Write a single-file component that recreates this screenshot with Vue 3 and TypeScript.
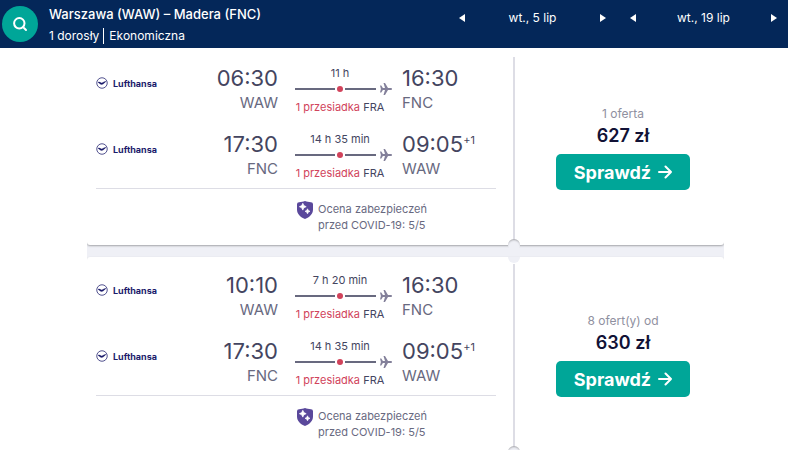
<script setup lang="ts">
interface Leg {
  departTime: string
  from: string
  duration: string
  arriveTime: string
  to: string
  nextDay?: string
}
interface Offer {
  id: number
  legs: Leg[]
  count: string
  price: string
}

const dates: string[] = ['wt., 5 lip', 'wt., 19 lip']

const back: Leg = {
  departTime: '17:30', from: 'FNC', duration: '14 h 35 min',
  arriveTime: '09:05', to: 'WAW', nextDay: '+1',
}

const offers: Offer[] = [
  {
    id: 1,
    legs: [{ departTime: '06:30', from: 'WAW', duration: '11 h', arriveTime: '16:30', to: 'FNC' }, back],
    count: '1 oferta',
    price: '627 zł',
  },
  {
    id: 2,
    legs: [{ departTime: '10:10', from: 'WAW', duration: '7 h 20 min', arriveTime: '16:30', to: 'FNC' }, back],
    count: '8 ofert(y) od',
    price: '630 zł',
  },
]
</script>

<template>
  <div class="page">
    <header class="top">
      <button class="search" type="button" aria-label="Szukaj">
        <svg width="16" height="16" viewBox="0 0 16 16" fill="none" stroke="#fff" stroke-width="2">
          <circle cx="7.3" cy="7.3" r="5.2" />
          <path d="M12 12l2 2" stroke-linecap="round" />
        </svg>
      </button>
      <div class="trip">
        <h1 class="trip-title">Warszawa (WAW) – Madera (FNC)</h1>
        <p class="trip-info"><span>1 dorosły</span><span class="cabin">Ekonomiczna</span></p>
      </div>
      <div class="dates">
        <div v-for="date in dates" :key="date" class="date">
          <button class="arrow" type="button" aria-label="Poprzedni dzień">
            <svg width="6" height="8" viewBox="0 0 6 8"><path d="M6 0v8L0 4z" fill="#fff" /></svg>
          </button>
          <span>{{ date }}</span>
          <button class="arrow" type="button" aria-label="Następny dzień">
            <svg width="6" height="8" viewBox="0 0 6 8"><path d="M0 0v8l6-4z" fill="#fff" /></svg>
          </button>
        </div>
      </div>
    </header>

    <main class="results">
      <div class="list">
        <article v-for="offer in offers" :key="offer.id" class="card">
          <div class="flights">
            <div class="legs">
              <div v-for="(leg, i) in offer.legs" :key="i" class="leg">
                <div class="carrier">
                  <svg width="12" height="12" viewBox="0 0 24 24" fill="none" stroke="#1b1b6b">
                    <circle cx="12" cy="12" r="10.5" stroke-width="1.5" />
                    <path d="M4 10.500c3-1 5 1 7 1.500 2 .3 4-2.500 9-3.500-2 2-5 6-8.500 6.500C8.500 15 7 12 4 10.500z" fill="#1b1b6b" stroke-width=".8" />
                  </svg>
                  <span>Lufthansa</span>
                </div>
                <div class="stop depart">
                  <span class="time">{{ leg.departTime }}</span>
                  <span class="code">{{ leg.from }}</span>
                </div>
                <div class="route">
                  <span class="duration">{{ leg.duration }}</span>
                  <div class="track">
                    <i class="line first"></i>
                    <i class="dot"></i>
                    <i class="line"></i>
                    <svg class="plane" width="12" height="12" viewBox="0 0 12 12">
                      <path d="M0 2.500h1.300L2.900 5H5L3.500 0H5l3 5h2.800C11.600 5 12 5.500 12 6s-.4 1-1.200 1H8l-3 5H3.500L5 7H2.900L1.300 9.500H0L.9 6z" fill="#83809a" />
                    </svg>
                  </div>
                  <span class="transfer"><b>1 przesiadka</b> FRA</span>
                </div>
                <div class="stop">
                  <span class="time">{{ leg.arriveTime }}<sup v-if="leg.nextDay">{{ leg.nextDay }}</sup></span>
                  <span class="code">{{ leg.to }}</span>
                </div>
              </div>
            </div>
            <div class="safety">
              <svg width="16" height="18" viewBox="0 0 16 18">
                <path d="M2 1.200C4.500 1.200 6 .6 8 0c2 .6 3.500 1.200 6 1.200a2 2 0 0 1 2 2V8.500c0 4.500-3.500 7.700-8 9.500-4.500-1.800-8-5-8-9.500V3.200a2 2 0 0 1 2-2z" fill="#5a489b" />
                <path d="M5.800 2.300l1.100 2.300 2.300 1.100-2.300 1.100-1.100 2.300-1.100-2.300-2.300-1.100 2.300-1.100zM10.500 7.800l.8 1.700 1.700.8-1.700.8-.8 1.700-.8-1.700-1.700-.8 1.700-.8z" fill="#fff" stroke="#fff" stroke-width=".7" />
              </svg>
              <p>Ocena zabezpieczeń<br />przed COVID-19: 5/5</p>
            </div>
          </div>
          <div class="divider"></div>
          <div class="deal">
            <span class="count">{{ offer.count }}</span>
            <strong class="price">{{ offer.price }}</strong>
            <button class="check" type="button">
              <span>Sprawdź</span>
              <svg width="14" height="14" viewBox="0 0 14 14" fill="none" stroke="#fff" stroke-width="2" stroke-linecap="round" stroke-linejoin="round">
                <path d="M1 7h12M7.500 1.500L13 7l-5.500 5.500" />
              </svg>
            </button>
          </div>
        </article>
      </div>
    </main>
  </div>
</template>

<style>
body {
  background: #fff;
}
</style>

<style scoped>
.page {
  box-sizing: border-box;
  display: flex;
  flex-direction: column;
  height: 100vh;
  padding-bottom: 4px;
  font-family: Inter, "Liberation Sans", sans-serif;
  color: #444560;
}
h1, p {
  margin: 0;
}
button {
  padding: 0;
  border: 0;
  background: none;
  font: inherit;
  color: inherit;
  cursor: pointer;
}
svg {
  display: block;
  flex: none;
}
.top {
  display: flex;
  align-items: center;
  flex: none;
  height: 48px;
  padding: 0 11px 0 2px;
  background: #042759;
  color: #fff;
}
.search {
  display: grid;
  place-items: center;
  width: 36px;
  height: 36px;
  border-radius: 50%;
  background: #00a698;
}
.trip {
  flex: 1;
  padding-left: 11px;
}
.trip-title {
  font-size: 13px;
  line-height: 20px;
  font-weight: 500;
}
.trip-info {
  display: flex;
  align-items: center;
  font-size: 12px;
  line-height: 16px;
  padding-top: 4px;
  font-weight: 400;
}
.cabin {
  margin-left: 4px;
  padding-left: 5px;
  border-left: 1px solid #fff;
}
.dates {
  display: flex;
  gap: 24px;
  align-self: flex-start;
  padding-top: 10px;
}
.date {
  display: flex;
  align-items: center;
  justify-content: space-between;
  width: 147px;
  font-size: 12px;
  line-height: 16px;
}
.results {
  flex: 1;
  min-height: 0;
  overflow: hidden;
}
.list {
  display: flex;
  flex-direction: column;
  gap: 12px;
  margin: 0 64px 0 87px;
  overflow: hidden;
  background: #eff0f6;
}
.card {
  position: relative;
  display: grid;
  grid-template-columns: 426fr 2px 209fr;
  height: 195px;
  border-radius: 3px;
  background: #fff;
  box-shadow: 0 1px 2px #00000050;
}
.card:first-child {
  padding-top: 2px;
  border-radius: 0 0 3px 3px;
}
.flights {
  padding: 11px 17px 0 9px;
}
.legs {
  display: grid;
  gap: 5px;
}
.leg {
  display: grid;
  grid-template-columns: 1fr 80px 97px 104px;
  height: 61px;
}
.carrier {
  display: flex;
  align-items: center;
  gap: 5px;
  height: 44px;
  font-size: 9px;
  font-weight: 700;
  color: #1b1b6b;
}
.stop {
  display: flex;
  flex-direction: column;
  padding: 1px 0 0 10px;
}
.depart {
  align-items: flex-end;
  padding: 1px 17px 0 0;
}
.time {
  font-size: 22px;
  line-height: 32px;
  height: 32px;
}
.time sup {
  font-size: 11px;
  line-height: 12px;
  vertical-align: 8px;
}
.code {
  font-size: 15px;
  line-height: 18px;
  color: #68697f;
}
.route {
  display: flex;
  flex-direction: column;
  font-size: 11px;
  line-height: 16px;
}
.duration,
.transfer {
  width: 90px;
  text-align: center;
  white-space: nowrap;
}
.duration {
  padding-top: 4px;
}
.transfer {
  padding-top: 2px;
}
.transfer b {
  font-weight: 400;
  color: #d1435b;
}
.track {
  display: flex;
  align-items: center;
  height: 16px;
}
.line {
  flex: 1;
  height: 2px;
  background: #68697f;
}
.line.first {
  flex: none;
  width: 40px;
}
.dot {
  width: 6px;
  height: 6px;
  margin: 0 2px;
  border-radius: 50%;
  background: #d1435b;
}
.plane {
  margin-left: 4px;
}
.safety {
  display: flex;
  gap: 5px;
  padding: 12px 0 0 201px;
  border-top: 1px solid #dddde5;
  font-size: 11px;
  line-height: 16px;
  color: #68697f;
}
.divider {
  margin-top: 7px;
  background: #dddde5;
}
.card::before,
.card::after {
  content: "";
  position: absolute;
  left: 67%;
  width: 12px;
  height: 6px;
  margin-left: -6px;
  background: #eff0f6;
}
.card::before {
  top: 0;
  border-radius: 0 0 6px 6px;
}
.card:first-child::before {
  display: none;
}
.card::after {
  bottom: -3px;
  height: 9px;
  border-radius: 6px 6px 0 0;
  box-shadow: inset 0 2px 2px -1px #00000050;
}
.deal {
  display: flex;
  flex-direction: column;
  align-items: center;
  padding: 56px 0 0 7px;
}
.count {
  font-size: 12px;
  line-height: 16px;
  color: #8f90a0;
}
.price {
  padding-top: 2px;
  font-size: 18px;
  line-height: 24px;
  font-weight: 600;
  color: #111236;
}
.check {
  display: flex;
  align-items: center;
  justify-content: center;
  gap: 7px;
  width: 134px;
  height: 36px;
  margin-top: 6px;
  border-radius: 5px;
  background: #00a698;
  color: #fff;
  font-size: 18px;
  font-weight: 700;
}
</style>
